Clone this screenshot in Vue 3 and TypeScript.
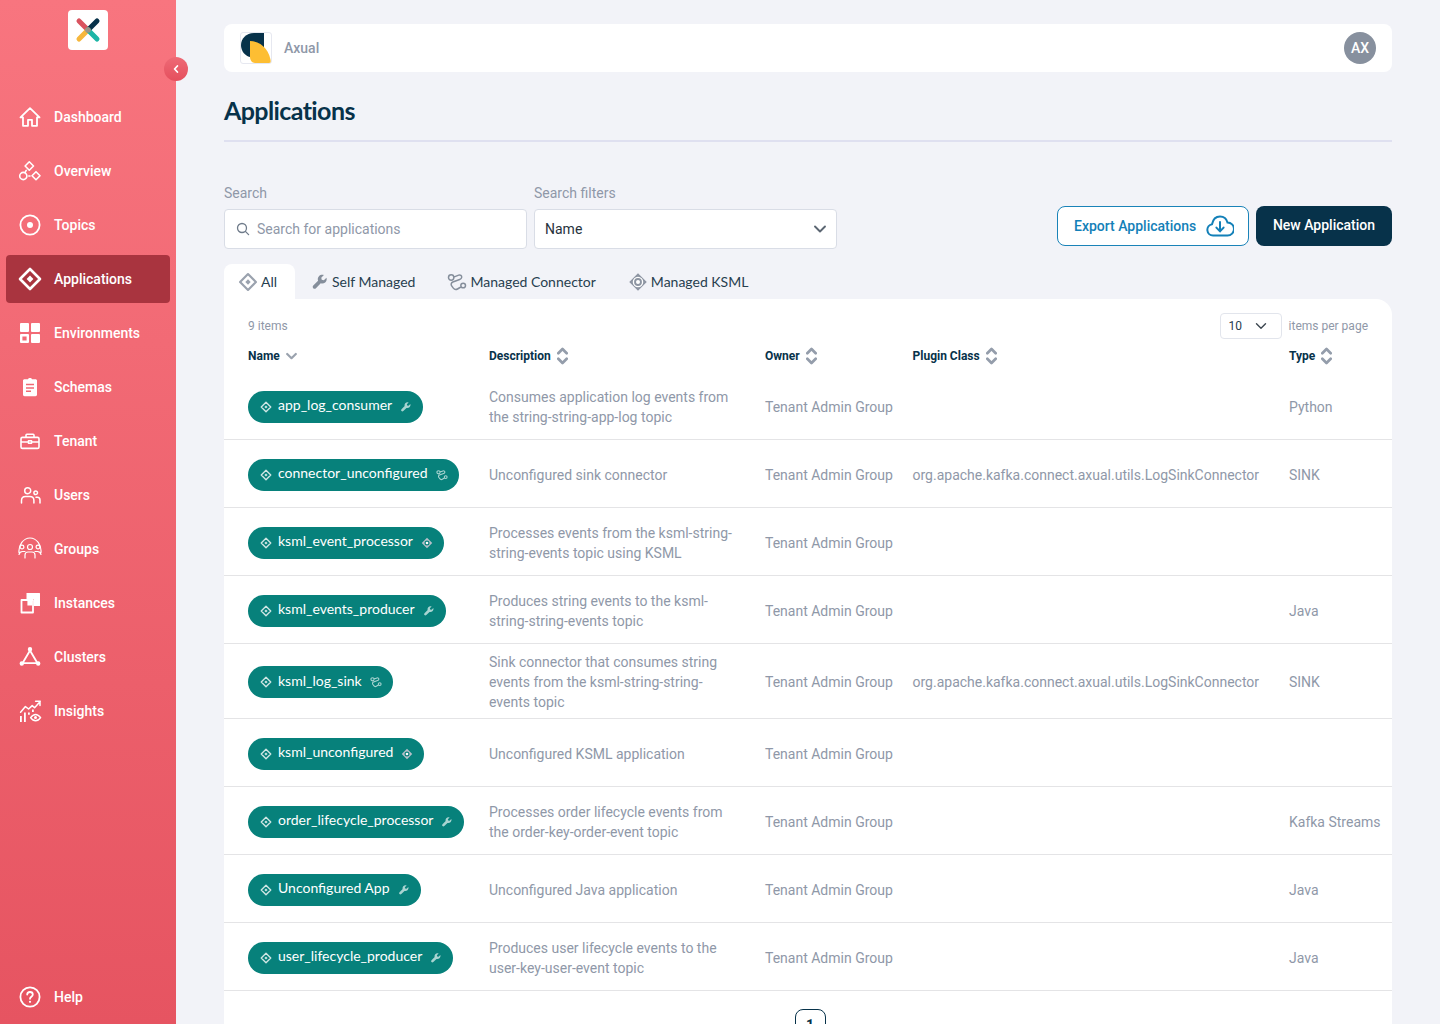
<script setup lang="ts">
interface NavItem {
    label: string
    stroke?: string
    fill?: string
    weight?: number
    active?: boolean
}

interface AppRow {
    name: string
    kind: 'wrench' | 'link' | 'ksml'
    description: string[]
    plugin?: string
    type?: string
}

const navItems: NavItem[] = [
    { label: 'Dashboard', stroke: 'M12 3.200 2.500 12.400H5V20.800h5v-6h4v6h5V12.400h2.500z' },
    {
        label: 'Overview',
        weight: 1.6,
        stroke: 'M11.300 2.800l4.200 4.200-4.200 4.200L7.100 7zM18 12.700l4 4-4 4-4-4zM8.900 17a3.600 3.600 0 1 1-7.200 0 3.600 3.600 0 0 1 7.200 0zM10.800 17h1.200M8.200 11.400l-.8 1.400'
    },
    { label: 'Topics', stroke: 'M21.600 12a9.600 9.600 0 1 1-19.200 0 9.600 9.600 0 0 1 19.200 0z', fill: 'M15 12a3 3 0 1 1-6 0 3 3 0 0 1 6 0z' },
    {
        label: 'Applications',
        active: true,
        weight: 2.6,
        stroke: 'M12 2 22 12 12 22 2 12z',
        fill: 'M12 8.600 15.400 12 12 15.400 8.600 12z'
    },
    {
        label: 'Environments',
        fill: 'M3 2h7a1 1 0 0 1 1 1v7a1 1 0 0 1-1 1H3a1 1 0 0 1-1-1V3a1 1 0 0 1 1-1zM14 2h7a1 1 0 0 1 1 1v7a1 1 0 0 1-1 1h-7a1 1 0 0 1-1-1V3a1 1 0 0 1 1-1zM14 13h7a1 1 0 0 1 1 1v7a1 1 0 0 1-1 1h-7a1 1 0 0 1-1-1v-7a1 1 0 0 1 1-1zM3 13h7a1 1 0 0 1 1 1v7a1 1 0 0 1-1 1H3a1 1 0 0 1-1-1v-7a1 1 0 0 1 1-1zm1.400 2.400v4.200h4.200v-4.200z'
    },
    {
        label: 'Schemas',
        fill: 'M10 4.200C10.200 3.400 11 3 12 3s1.800.4 2 1.200h3.400c.9 0 1.600.6 1.600 1.400v14.200c0 .8-.7 1.400-1.600 1.400H6.600c-.9 0-1.600-.6-1.600-1.400V5.600c0-.8.7-1.400 1.600-1.400zM8 8.800v1.500h8V8.800zm0 3.400v1.500h8v-1.500zm0 3.400v1.500h5v-1.500z'
    },
    {
        label: 'Tenant',
        weight: 1.6,
        stroke: 'M4.400 8.400h15.200c.8 0 1.400.6 1.400 1.400v8.200c0 .8-.6 1.400-1.400 1.400H4.400c-.8 0-1.400-.6-1.400-1.400V9.800c0-.8.6-1.400 1.400-1.400zM8 8.200v-2c0-.5.4-.9.9-.9h6.200c.5 0 .9.4.9.9v2M3 13h6.500M14.500 13H21M10.500 11.800h3v2.400h-3z'
    },
    {
        label: 'Users',
        weight: 1.5,
        stroke: 'M12.700 7.700a3 3 0 1 1-6 0 3 3 0 0 1 6 0zM3.500 20v-2.400c0-2.400 1.800-4 4-4h4.400c2.200 0 4 1.600 4 4V20M19.500 9.700a1.800 1.800 0 1 1-3.600 0 1.800 1.800 0 0 1 3.600 0zM18 14.200h1.400c1.600 0 2.600 1.200 2.600 2.800V20'
    },
    {
        label: 'Groups',
        weight: 1.2,
        stroke: 'M1 15.500C.3 8 5.500 1 12 1s11.700 7 11 14.500M14.500 10a2.500 2.500 0 1 1-5 0 2.500 2.500 0 0 1 5 0zM5.900 10a1.900 1.900 0 1 1-3.800 0 1.900 1.900 0 0 1 3.800 0zM21.900 10a1.900 1.900 0 1 1-3.800 0 1.900 1.900 0 0 1 3.800 0zM7 21v-3c0-1.800 1.200-3 3-3h4c1.800 0 3 1.200 3 3v3M1 17.500c.5-2 1.800-3 3.500-3H7M23 17.500c-.5-2-1.800-3-3.500-3H17'
    },
    {
        label: 'Instances',
        stroke: 'M3.500 9h11.500v12.500H3.500z',
        fill: 'M8.500 2h13c.3 0 .5.2.5.5V15h-6V8H8.500zM9.400 9.800h4.800v4.800H9.400z'
    },
    {
        label: 'Clusters',
        stroke: 'M12 5.500 4.500 18.200h15z',
        fill: 'M14.200 4.200a2.200 2.200 0 1 1-4.400 0 2.200 2.200 0 0 1 4.400 0zM6 18.500a2.200 2.200 0 1 1-4.400 0 2.200 2.200 0 0 1 4.400 0zM22.400 18.500a2.200 2.200 0 1 1-4.400 0 2.200 2.200 0 0 1 4.400 0z'
    },
    {
        label: 'Insights',
        weight: 1.5,
        stroke: 'M2.600 13.200 7.400 7.600l3.200 2.400 3.600-3.400 2.400 2.200 5.600-6.400M17.600 2.200h4.400v4.400M12.600 18.600c1.600-2.200 3.400-3.200 5-3.200s3.400 1 5 3.200c-1.600 2.200-3.400 3.200-5 3.200s-3.400-1-5-3.200z',
        fill: 'M2 17h1.800v6H2zM6 13.400h1.800V23H6zM10 13.400h1.800v2.400H10zM14 10.600h1.800v2.400H14zM19 18.600a1.500 1.500 0 1 1-3 0 1.500 1.500 0 0 1 3 0z'
    }
]

const rows: AppRow[] = [
    { name: 'app_log_consumer', kind: 'wrench', description: ['Consumes application log events from', 'the string-string-app-log topic'], type: 'Python' },
    {
        name: 'connector_unconfigured',
        kind: 'link',
        description: ['Unconfigured sink connector'],
        plugin: 'org.apache.kafka.connect.axual.utils.LogSinkConnector',
        type: 'SINK'
    },
    { name: 'ksml_event_processor', kind: 'ksml', description: ['Processes events from the ksml-string-', 'string-events topic using KSML'] },
    { name: 'ksml_events_producer', kind: 'wrench', description: ['Produces string events to the ksml-', 'string-string-events topic'], type: 'Java' },
    {
        name: 'ksml_log_sink',
        kind: 'link',
        description: ['Sink connector that consumes string', 'events from the ksml-string-string-', 'events topic'],
        plugin: 'org.apache.kafka.connect.axual.utils.LogSinkConnector',
        type: 'SINK'
    },
    { name: 'ksml_unconfigured', kind: 'ksml', description: ['Unconfigured KSML application'] },
    {
        name: 'order_lifecycle_processor',
        kind: 'wrench',
        description: ['Processes order lifecycle events from', 'the order-key-order-event topic'],
        type: 'Kafka Streams'
    },
    { name: 'Unconfigured App', kind: 'wrench', description: ['Unconfigured Java application'], type: 'Java' },
    { name: 'user_lifecycle_producer', kind: 'wrench', description: ['Produces user lifecycle events to the', 'user-key-user-event topic'], type: 'Java' }
]

const wrench = 'M20.600 6.200l-3.500 3.500-2.800-.6-.6-2.800 3.500-3.500c-2.400-.9-5-.3-6.600 1.500-1.500 1.600-1.900 3.900-1.200 5.900L3 16.600c-1 1-1 2.600 0 3.600s2.600 1 3.600 0l6.400-6.400c2 .7 4.300.3 5.900-1.200 1.800-1.700 2.600-4.100 1.700-6.400z'
const link = 'M5 3.400a3.200 3.200 0 1 1 0 6.400 3.200 3.200 0 0 1 0-6.400zM8 6.200l6-2.400c2-.8 4 .8 3.600 2.800-.2 1.200-1.200 2-2.400 2.400L7 12c-2 .8-2.600 3-1.400 4.600l2 2.800c1.200 1.600 3.400 2 5 1l5-3M19.400 13.400a2.800 2.800 0 1 1 0 5.600 2.800 2.800 0 0 1 0-5.600z'
const columns = ['Description', 'Owner', 'Plugin Class', 'Type']
</script>

<template>
    <div class="app">
        <aside class="sidebar">
            <div class="logo">
                <svg width="28" height="28" viewBox="0 0 28 28">
                    <path d="M5 5 14 14" stroke="#d9535f" stroke-width="5" stroke-linecap="round" />
                    <path d="M23 5 14 14" stroke="#07324a" stroke-width="5" stroke-linecap="round" />
                    <path d="M5 23 14 14" stroke="#f6b73c" stroke-width="5" stroke-linecap="round" />
                    <path d="M23 23 14 14" stroke="#1db5a6" stroke-width="5" stroke-linecap="round" />
                    <circle cx="14" cy="14" r="2.800" fill="#9c9488" />
                </svg>
            </div>
            <button class="collapse" type="button">
                <svg width="10" height="10" viewBox="0 0 10 10"><path d="M6.400 2 3.600 5l2.800 3" fill="none" stroke="#fff" stroke-width="1.800" stroke-linecap="round" stroke-linejoin="round" /></svg>
            </button>
            <nav class="nav">
                <a v-for="item in navItems" :key="item.label" class="nav-item" :class="{ active: item.active }">
                    <svg class="nav-icon" viewBox="0 0 24 24">
                        <path v-if="item.stroke" :d="item.stroke" class="line" :style="{ strokeWidth: item.weight }" />
                        <path v-if="item.fill" :d="item.fill" class="solid" />
                    </svg>
                    <span>{{ item.label }}</span>
                </a>
            </nav>
            <a class="nav-item help">
                <svg class="nav-icon" viewBox="0 0 24 24">
                    <path d="M21.600 12a9.600 9.600 0 1 1-19.200 0 9.600 9.600 0 0 1 19.200 0zM9.200 9.600c0-1.600 1.200-2.600 2.800-2.600s2.800 1 2.800 2.500c0 2.200-2.800 2.200-2.800 4.300" class="line" />
                    <path d="M13.100 16.800a1.100 1.100 0 1 1-2.200 0 1.100 1.100 0 0 1 2.200 0z" class="solid" />
                </svg>
                <span>Help</span>
            </a>
        </aside>

        <main class="main">
            <header class="topbar">
                <div class="org-logo">
                    <svg width="30" height="30" viewBox="0 0 30 30">
                        <path d="M23 0H13C5 0 0 6 0 12s4 11 9 12h14z" fill="#07324a" />
                        <path d="M9 8c11 0 20 9 21 22H14c-3 0-5-3-5-6z" fill="#fdbe33" />
                    </svg>
                </div>
                <span class="org-name">Axual</span>
                <span class="avatar">AX</span>
            </header>

            <h1 class="title">Applications</h1>

            <section class="filters">
                <div class="field">
                    <label>Search</label>
                    <div class="input">
                        <svg width="14" height="14" viewBox="0 0 14 14"><circle cx="6" cy="6" r="4.500" fill="none" stroke="#6f7b8a" stroke-width="1.300" /><path d="M9.400 9.400 12.600 12.600" stroke="#6f7b8a" stroke-width="1.300" stroke-linecap="round" /></svg>
                        <span class="placeholder">Search for applications</span>
                    </div>
                </div>
                <div class="field">
                    <label>Search filters</label>
                    <div class="input select">
                        <span>Name</span>
                        <svg width="14" height="14" viewBox="0 0 14 14"><path d="M2 4.500 7 9.500 12 4.500" fill="none" stroke="#5b6672" stroke-width="1.900" stroke-linecap="round" stroke-linejoin="round" /></svg>
                    </div>
                </div>
                <div class="actions">
                    <button class="btn outline" type="button">
                        Export Applications
                        <svg width="28" height="22" viewBox="0 0 28 22">
                            <path d="M8 20.500H7a5.700 5.700 0 0 1-1-11.300C7 4.500 10.200 1.500 14 1.500c3.600 0 6.600 2.500 7.500 6a6.500 6.500 0 0 1 0 13H8z" fill="none" stroke="currentColor" stroke-width="2" />
                            <path d="M14 7v9M10.400 12.600 14 16.400l3.600-3.800" fill="none" stroke="currentColor" stroke-width="2" stroke-linecap="round" stroke-linejoin="round" />
                        </svg>
                    </button>
                    <button class="btn solid-btn" type="button">New Application</button>
                </div>
            </section>

            <div class="tabs">
                <a class="tab current">
                    <svg width="20" height="20" viewBox="0 0 24 24"><path d="M12 2.500 21.500 12 12 21.500 2.500 12z" fill="none" stroke="#9aa2ae" stroke-width="2.600" stroke-linejoin="round" /><path d="M12 8.800 15.200 12 12 15.200 8.800 12z" fill="#9aa2ae" /></svg>
                    All
                </a>
                <a class="tab">
                    <svg width="18" height="18" viewBox="0 0 24 24"><path :d="wrench" fill="#858e9b" /></svg>
                    Self Managed
                </a>
                <a class="tab">
                    <svg width="20" height="20" viewBox="0 0 24 24"><path :d="link" fill="none" stroke="#858e9b" stroke-width="1.800" /></svg>
                    Managed Connector
                </a>
                <a class="tab">
                    <svg width="20" height="20" viewBox="0 0 24 24"><path d="M12 1.500 22.500 12 12 22.500 1.500 12z" fill="#8d95a2" /><circle cx="12" cy="12" r="5.500" fill="none" stroke="#fff" stroke-width="1.600" /><circle cx="12" cy="12" r="2.400" fill="#fff" /></svg>
                    Managed KSML
                </a>
            </div>

            <section class="card">
                <div class="card-top">
                    <span class="count">9 items</span>
                    <div class="per-page">
                        <div class="page-size">
                            <span>10</span>
                            <svg width="12" height="12" viewBox="0 0 12 12"><path d="M1.500 3.800 6 8.200l4.500-4.400" fill="none" stroke="#3c4650" stroke-width="1.400" stroke-linecap="round" stroke-linejoin="round" /></svg>
                        </div>
                        <span class="count">items per page</span>
                    </div>
                </div>

                <table class="table">
                    <colgroup>
                        <col style="width: 241px" />
                        <col style="width: 276px" />
                        <col style="width: 147.5px" />
                        <col style="width: 376.5px" />
                        <col />
                    </colgroup>
                    <thead>
                        <tr>
                            <th>
                                <span class="th">
                                    Name
                                    <svg width="11" height="10" viewBox="0 0 11 10"><path d="M1.200 3 5.500 7.200 9.800 3" fill="none" stroke="#9aa2ae" stroke-width="2.200" stroke-linecap="round" stroke-linejoin="round" /></svg>
                                </span>
                            </th>
                            <th v-for="col in columns" :key="col">
                                <span class="th">
                                    {{ col }}
                                    <svg width="11" height="18" viewBox="0 0 11 18"><path d="M1.300 6.300 5.500 2l4.200 4.300M1.300 11.700 5.500 16l4.200-4.300" fill="none" stroke="#949dab" stroke-width="2.700" stroke-linecap="round" stroke-linejoin="round" /></svg>
                                </span>
                            </th>
                        </tr>
                    </thead>
                    <tbody>
                        <tr v-for="row in rows" :key="row.name">
                            <td>
                                <span class="pill">
                                    <svg width="12" height="12" viewBox="0 0 24 24"><path d="M12 2.500 21.500 12 12 21.500 2.500 12z" fill="none" stroke="#cfe6e4" stroke-width="2.800" stroke-linejoin="round" /><path d="M12 8.800 15.200 12 12 15.200 8.800 12z" fill="#cfe6e4" /></svg>
                                    <span class="pill-name">{{ row.name }}</span>
                                    <svg v-if="row.kind === 'wrench'" width="12" height="12" viewBox="0 0 24 24"><path :d="wrench" fill="#a9d4d1" /></svg>
                                    <svg v-else-if="row.kind === 'link'" width="12" height="12" viewBox="0 0 24 24"><path :d="link" fill="none" stroke="#a9d4d1" stroke-width="2.200" /></svg>
                                    <svg v-else width="12" height="12" viewBox="0 0 24 24"><path d="M12 1.500 22.500 12 12 22.500 1.500 12z" fill="#b6bfc8" /><circle cx="12" cy="12" r="5" fill="#07817b" /><circle cx="12" cy="12" r="2.600" fill="#fff" /></svg>
                                </span>
                            </td>
                            <td>
                                <div v-for="line in row.description" :key="line">{{ line }}</div>
                            </td>
                            <td>Tenant Admin Group</td>
                            <td>{{ row.plugin }}</td>
                            <td>{{ row.type }}</td>
                        </tr>
                    </tbody>
                </table>

                <div class="pagination">
                    <span class="page-btn">1</span>
                </div>
            </section>
        </main>
    </div>
</template>

<style>
html,
body {
    margin: 0;
    background: #f2f3f8;
}
</style>

<style scoped>
.app {
    display: flex;
    height: 100vh;
    overflow: hidden;
    font-family: Roboto, sans-serif;
    background: #f2f3f8;
}

.sidebar {
    position: relative;
    flex: 0 0 176px;
    display: flex;
    flex-direction: column;
    align-items: stretch;
    background: linear-gradient(180deg, #f8757f 0%, #e65461 100%);
    color: #fff;
}

.logo {
    width: 40px;
    height: 40px;
    margin: 10px auto 0;
    display: flex;
    align-items: center;
    justify-content: center;
    background: #fff;
    border-radius: 4px;
}

.collapse {
    position: absolute;
    top: 57px;
    left: 164px;
    width: 24px;
    height: 24px;
    padding: 0;
    border: 0;
    border-radius: 50%;
    display: flex;
    align-items: center;
    justify-content: center;
    background: linear-gradient(180deg, #ee6a76, #e54f5d);
}

.nav {
    flex: 1;
    display: flex;
    flex-direction: column;
    gap: 6px;
    padding: 43px 6px 0;
}

.nav-item {
    display: flex;
    align-items: center;
    gap: 12px;
    height: 48px;
    padding: 0 12px;
    border-radius: 4px;
    font-size: 14px;
    font-weight: 500;
}

.nav-item.active {
    background: #a9343f;
}

.help {
    margin: 0 6px 3px;
}

.nav-icon {
    width: 24px;
    height: 24px;
    flex: none;
}

.line {
    fill: none;
    stroke: #fff;
    stroke-width: 1.8;
    stroke-linecap: round;
    stroke-linejoin: round;
}

.solid {
    fill: #fff;
}

.main {
    flex: 1;
    min-width: 0;
    padding: 24px 48px 0;
}

.topbar {
    display: flex;
    align-items: center;
    height: 48px;
    padding: 0 16px;
    background: #fff;
    border-radius: 8px;
}

.org-logo {
    width: 32px;
    height: 32px;
    display: flex;
    align-items: center;
    justify-content: center;
    box-sizing: border-box;
    border: 1px solid #e6e8f0;
    border-radius: 3px;
    overflow: hidden;
}

.org-name {
    margin-left: 12px;
    font-size: 14px;
    font-weight: 500;
    color: #8f98a8;
}

.avatar {
    margin-left: auto;
    width: 32px;
    height: 32px;
    display: flex;
    align-items: center;
    justify-content: center;
    border-radius: 50%;
    background: #87909e;
    color: #fff;
    font-size: 14px;
    font-weight: 500;
}

.title {
    margin: 0;
    height: 70px;
    box-sizing: border-box;
    padding-top: 23px;
    border-bottom: 2px solid #dfe0f0;
    font-family: Lato, sans-serif;
    font-size: 25px;
    line-height: 30px;
    font-weight: 700;
    letter-spacing: -0.6px;
    color: #07324a;
}

.filters {
    display: flex;
    align-items: flex-end;
    gap: 7px;
    margin-top: 43px;
}

.field {
    width: 303px;
}

.field label {
    display: block;
    margin-bottom: 8px;
    font-size: 14px;
    line-height: 16px;
    color: #8f98a8;
}

.input {
    display: flex;
    align-items: center;
    gap: 7px;
    height: 40px;
    box-sizing: border-box;
    padding: 0 11px;
    background: #fff;
    border: 1px solid #d9dde6;
    border-radius: 4px;
    font-size: 14px;
    color: #07324a;
}

.placeholder {
    color: #8f98a8;
}

.select {
    justify-content: space-between;
    padding: 0 9px 0 10px;
    color: #27323c;
}

.actions {
    margin-left: auto;
    display: flex;
    gap: 7px;
    padding-bottom: 3px;
}

.btn {
    height: 40px;
    box-sizing: border-box;
    border-radius: 8px;
    font-family: Roboto, sans-serif;
    font-size: 14px;
    font-weight: 500;
    display: flex;
    align-items: center;
}

.outline {
    width: 192px;
    gap: 10px;
    padding: 0 0 0 16px;
    background: #fff;
    border: 1px solid #1a83b8;
    color: #1380b8;
}

.solid-btn {
    width: 136px;
    justify-content: center;
    padding: 0 0 2px;
    background: #07324a;
    border: 0;
    color: #fff;
}

.tabs {
    display: flex;
    margin-top: 15px;
    height: 35px;
}

.tab {
    display: flex;
    align-items: center;
    gap: 3px;
    padding: 0 16px;
    border-radius: 8px 8px 0 0;
    font-family: Lato, sans-serif;
    font-size: 14px;
    color: #27404f;
}

.tab.current {
    background: #fff;
    padding: 0 18px 0 14px;
}

.card {
    background: #fff;
    border-radius: 0 16px 0 0;
}

.card-top {
    display: flex;
    align-items: center;
    justify-content: space-between;
    padding: 14px 24px 0;
    height: 26px;
}

.count {
    font-size: 12px;
    color: #8f98a8;
}

.per-page {
    display: flex;
    align-items: center;
    gap: 7px;
}

.page-size {
    width: 62px;
    height: 26px;
    box-sizing: border-box;
    padding: 0 14px 0 8px;
    display: flex;
    align-items: center;
    justify-content: space-between;
    border: 1px solid #e2e5ec;
    border-radius: 4px;
    font-size: 12px;
    color: #27404f;
}

.table {
    width: 100%;
    table-layout: fixed;
    border-collapse: separate;
    border-spacing: 0;
    margin-top: 1px;
}

th {
    height: 32px;
    padding: 0 0 0 24px;
    text-align: left;
    font-size: 12px;
    font-weight: 700;
    color: #07324a;
}

.th {
    display: inline-flex;
    align-items: center;
    gap: 6px;
}

td {
    height: 68px;
    box-sizing: border-box;
    padding: 8px 0 6px 24px;
    border-bottom: 1px solid #e4e4e6;
    font-size: 14px;
    line-height: 20px;
    color: #8f98a8;
    white-space: nowrap;
}

.pill {
    display: inline-flex;
    align-items: center;
    height: 32px;
    padding: 0 11px 0 12px;
    border-radius: 16px;
    background: #07817b;
    font-family: Lato, sans-serif;
    font-size: 14px;
    color: #fff;
    vertical-align: middle;
}

.pill-name {
    margin: 0 8px 0 6px;
    padding-bottom: 3px;
}

.pagination {
    display: flex;
    justify-content: center;
    padding-top: 18px;
    transform: translateX(2px);
}

.page-btn {
    width: 31px;
    height: 32px;
    box-sizing: border-box;
    display: flex;
    align-items: center;
    justify-content: center;
    border: 1px solid #07324a;
    border-radius: 8px;
    font-size: 14px;
    font-weight: 700;
    color: #07324a;
}
</style>
